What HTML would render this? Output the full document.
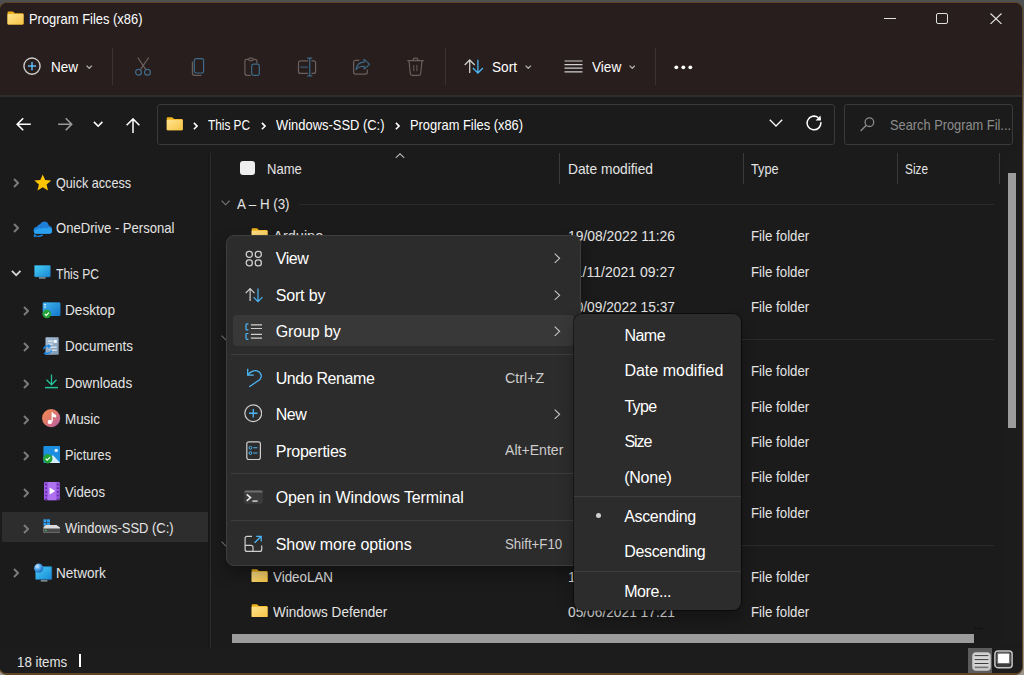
<!DOCTYPE html>
<html><head><meta charset="utf-8"><style>
html,body{margin:0;padding:0;width:1024px;height:675px;overflow:hidden;background:linear-gradient(to bottom,#4e4f50 0px,#4e4f50 60px,#9d978d 150px);}
body{position:relative;font-family:"Liberation Sans",sans-serif;}
.t{position:absolute;white-space:nowrap;line-height:1;}
.r{position:absolute;display:block;}
</style></head><body>
<div class="r" style="left:-1px;top:2px;width:1024px;height:673px;box-sizing:border-box;border:1px solid #5e4424;border-bottom-width:2px;border-radius:8px;background:#271e1d"></div>
<div class="r" style="left:0;top:0;width:1024px;height:675px;clip-path:inset(3px 2px 2px 0px round 7px);">
<div class="r" style="left:0.00px;top:0.00px;width:1024.00px;height:95.00px;background:#271e1d;"></div>
<div class="r" style="left:0.00px;top:95.00px;width:1024.00px;height:2.00px;background:#2f2d2c;"></div>
<div class="r" style="left:0.00px;top:97.00px;width:1024.00px;height:578.00px;background:#1b1b1b;"></div>
<svg width="0" height="0" style="position:absolute"><defs><linearGradient id="gf" x1="0" y1="0" x2="1" y2="1"><stop offset="0" stop-color="#ffe38f"/><stop offset="1" stop-color="#f6c445"/></linearGradient></defs></svg>
<svg class="r" style="left:7.00px;top:10.50px" width="17" height="14" viewBox="0 0 17 13.5"><path d="M0.5 1.2 Q0.5 0.3 1.4 0.3 L5.6 0.3 Q6.3 0.3 6.8 0.9 L7.8 1.9 L15.6 1.9 Q16.5 1.9 16.5 2.8 L16.5 12.3 Q16.5 13.2 15.6 13.2 L1.4 13.2 Q0.5 13.2 0.5 12.3 Z" fill="#f0b21a"/><path d="M0.5 3.6 Q0.5 2.8 1.4 2.8 L15.6 2.8 Q16.5 2.8 16.5 3.6 L16.5 12.3 Q16.5 13.2 15.6 13.2 L1.4 13.2 Q0.5 13.2 0.5 12.3 Z" fill="url(#gf)"/></svg>
<div class="t" style="left:28.60px;top:12px;font-size:14.50px;color:#ffffff;transform:scaleX(0.8915);transform-origin:0 0;">Program Files (x86)</div>
<div class="r" style="left:884.00px;top:18.00px;width:11.50px;height:1.00px;background:#e0e0e0;"></div>
<div class="r" style="left:935.80px;top:13.00px;width:12.20px;height:11.00px;background:transparent;border:1px solid #e0e0e0;border-radius:2px;box-sizing:border-box;"></div>
<svg class="r" style="left:989.50px;top:12.80px" width="12" height="11.5" viewBox="0 0 12 11.5"><path d="M0.5 0.5 L11.5 11 M11.5 0.5 L0.5 11" stroke="#e0e0e0" stroke-width="1.1"/></svg>
<svg class="r" style="left:22.00px;top:56.00px" width="20" height="20" viewBox="0 0 20 20"><circle cx="10" cy="10.1" r="8.1" fill="none" stroke="#cfcfcf" stroke-width="1.4"/><path d="M10 6 V14.2 M5.9 10.1 H14.1" stroke="#5fb8f6" stroke-width="1.5"/></svg>
<div class="t" style="left:51.20px;top:60px;font-size:14.50px;color:#ffffff;transform:scaleX(0.9308);transform-origin:0 0;">New</div>
<svg class="r" style="left:86.00px;top:64.80px" width="6.5" height="4" viewBox="0 0 6.5 4"><path d="M0.6 0.6 L3.25 3.3 L5.9 0.6" fill="none" stroke="#b0b0b0" stroke-width="1.3"/></svg>
<div class="r" style="left:112.00px;top:48.00px;width:1.00px;height:36.50px;background:#3a3332;"></div>
<svg class="r" style="left:134.00px;top:56.00px" width="18" height="20" viewBox="0 0 18 20"><path d="M3.8 1.5 L11.8 13.6 M14.7 1.5 L6.4 13.6" stroke="#6a605d" stroke-width="1.2" fill="none"/><circle cx="4.5" cy="16.2" r="2.9" fill="none" stroke="#3f6b8a" stroke-width="1.2"/><circle cx="13.5" cy="16.2" r="2.9" fill="none" stroke="#3f6b8a" stroke-width="1.2"/></svg>
<svg class="r" style="left:189.50px;top:56.50px" width="16" height="20" viewBox="0 0 16 20"><path d="M2.4 4.5 V16 Q2.4 18.3 4.7 18.3 H11.5" fill="none" stroke="#6a605d" stroke-width="1.2"/><rect x="4.3" y="1.6" width="9.3" height="14.4" rx="2" fill="none" stroke="#3f6b8a" stroke-width="1.2"/></svg>
<svg class="r" style="left:243.00px;top:56.50px" width="18" height="20" viewBox="0 0 18 20"><path d="M5.3 2.35 H3.9 Q1.9 2.35 1.9 4.35 V16.3 Q1.9 18.3 3.9 18.3 H7.8" fill="none" stroke="#6a605d" stroke-width="1.2"/><path d="M10.4 2.35 H11.9 Q13.9 2.35 13.9 4.35 V6.4" fill="none" stroke="#6a605d" stroke-width="1.2"/><rect x="5.6" y="1.1" width="4.6" height="2.5" rx="1.2" fill="none" stroke="#6a605d" stroke-width="1.1"/><rect x="8.7" y="7.1" width="7.6" height="11.2" rx="1.8" fill="none" stroke="#3f6b8a" stroke-width="1.2"/></svg>
<svg class="r" style="left:296.50px;top:56.50px" width="20" height="20" viewBox="0 0 20 20"><path d="M11 3.9 H3.5 Q1.5 3.9 1.5 5.9 V14.4 Q1.5 16.4 3.5 16.4 H11 M14.5 3.9 H16.6 Q18.6 3.9 18.6 5.9 V14.4 Q18.6 16.4 16.6 16.4 H14.5" fill="none" stroke="#6a605d" stroke-width="1.2"/><path d="M12.75 1.1 V18.9 M10.25 1.1 H15.3 M10.25 18.9 H15.3" stroke="#3f6b8a" stroke-width="1.2" fill="none"/><path d="M3.6 10.2 H10.6" stroke="#3f6b8a" stroke-width="1.3" stroke-dasharray="2 0.6" fill="none"/></svg>
<svg class="r" style="left:352.00px;top:58.00px" width="19" height="17" viewBox="0 0 19 17"><path d="M7.3 2.4 H3.6 Q1.6 2.4 1.6 4.4 V14.1 Q1.6 16.1 3.6 16.1 H13.3 Q15.3 16.1 15.3 14.1 V11.6" fill="none" stroke="#6a605d" stroke-width="1.2"/><path d="M4 11.6 Q5 4.2 12.1 4.1 V1.4 L17.6 6.3 L12.1 11 V8.3 Q7.2 8.1 4 11.6 Z" fill="none" stroke="#3f6b8a" stroke-width="1.1" stroke-linejoin="round"/></svg>
<svg class="r" style="left:407.00px;top:56.50px" width="17" height="20" viewBox="0 0 17 20"><path d="M0.3 3.7 H16.7 M6.2 3.7 V2.6 Q6.2 1.1 8.5 1.1 Q10.9 1.1 10.9 2.6 V3.7 M2 4 L3.3 16.5 Q3.5 18.3 5.3 18.3 H11.7 Q13.5 18.3 13.7 16.5 L15 4" fill="none" stroke="#6a605d" stroke-width="1.2"/><path d="M6.8 8 V14.2 M9.9 8 V14.2" stroke="#6a605d" stroke-width="1"/></svg>
<div class="r" style="left:445.00px;top:48.00px;width:1.00px;height:36.50px;background:#3a3332;"></div>
<svg class="r" style="left:464.00px;top:59.00px" width="20" height="16" viewBox="0 0 20 16"><path d="M5.7 1.2 V14.1 M0.7 6 L5.7 1 L10.7 6" fill="none" stroke="#cfcfcf" stroke-width="1.3"/><path d="M13.9 0.8 V14 M8.9 9 L13.9 14 L18.9 9" fill="none" stroke="#4cb6f5" stroke-width="1.3"/></svg>
<div class="t" style="left:492.00px;top:60px;font-size:14.50px;color:#ffffff;transform:scaleX(0.9401);transform-origin:0 0;">Sort</div>
<svg class="r" style="left:525.00px;top:64.80px" width="6.5" height="4" viewBox="0 0 6.5 4"><path d="M0.6 0.6 L3.25 3.3 L5.9 0.6" fill="none" stroke="#b0b0b0" stroke-width="1.3"/></svg>
<svg class="r" style="left:564.00px;top:60.00px" width="19" height="13" viewBox="0 0 19 13"><path d="M0.5 1 H18.5 M0.5 4.6 H18.5 M0.5 8.2 H18.5 M0.5 11.8 H18.5" stroke="#d0d0d0" stroke-width="1.2"/></svg>
<div class="t" style="left:592.00px;top:60px;font-size:14.50px;color:#ffffff;transform:scaleX(0.9385);transform-origin:0 0;">View</div>
<svg class="r" style="left:628.80px;top:64.80px" width="6.5" height="4" viewBox="0 0 6.5 4"><path d="M0.6 0.6 L3.25 3.3 L5.9 0.6" fill="none" stroke="#b0b0b0" stroke-width="1.3"/></svg>
<div class="r" style="left:655.00px;top:48.00px;width:1.00px;height:36.50px;background:#3a3332;"></div>
<svg class="r" style="left:674.00px;top:64.50px" width="19" height="5" viewBox="0 0 19 5"><circle cx="2.3" cy="2.3" r="1.9" fill="#ffffff"/><circle cx="9.3" cy="2.3" r="1.9" fill="#ffffff"/><circle cx="16.3" cy="2.3" r="1.9" fill="#ffffff"/></svg>
<svg class="r" style="left:16.00px;top:117.00px" width="16" height="15" viewBox="0 0 16 15"><path d="M1.2 7.3 H14.8 M7.2 1.3 L1.2 7.3 L7.2 13.3" fill="none" stroke="#ffffff" stroke-width="1.6"/></svg>
<svg class="r" style="left:56.50px;top:117.00px" width="16" height="15" viewBox="0 0 16 15"><g transform="translate(15.9,0) scale(-1,1)"><path d="M1.2 7.3 H14.8 M7.2 1.3 L1.2 7.3 L7.2 13.3" fill="none" stroke="#9a9a9a" stroke-width="1.6"/></g></svg>
<svg class="r" style="left:92.50px;top:121.00px" width="11" height="7" viewBox="0 0 11 7"><path d="M0.9 0.9 L5.15 5.2 L9.4 0.9" fill="none" stroke="#ffffff" stroke-width="1.6"/></svg>
<svg class="r" style="left:125.00px;top:117.50px" width="16" height="16" viewBox="0 0 16 16"><path d="M8 1.2 V15 M1.6 7.3 L8 0.9 L14.4 7.3" fill="none" stroke="#ffffff" stroke-width="1.5"/></svg>
<div class="r" style="left:157.00px;top:104.00px;width:678.00px;height:41.00px;background:#1b1b1b;border:1px solid #3a3a3a;border-radius:3px;box-sizing:border-box;"></div>
<svg class="r" style="left:166.00px;top:117.00px" width="17.5" height="13.5" viewBox="0 0 17 13.5"><path d="M0.5 1.2 Q0.5 0.3 1.4 0.3 L5.6 0.3 Q6.3 0.3 6.8 0.9 L7.8 1.9 L15.6 1.9 Q16.5 1.9 16.5 2.8 L16.5 12.3 Q16.5 13.2 15.6 13.2 L1.4 13.2 Q0.5 13.2 0.5 12.3 Z" fill="#f0b21a"/><path d="M0.5 3.6 Q0.5 2.8 1.4 2.8 L15.6 2.8 Q16.5 2.8 16.5 3.6 L16.5 12.3 Q16.5 13.2 15.6 13.2 L1.4 13.2 Q0.5 13.2 0.5 12.3 Z" fill="url(#gf)"/></svg>
<svg class="r" style="left:192.50px;top:121.50px" width="5" height="8" viewBox="0 0 5 8"><path d="M0.9 0.9 L4.1 4.1 L0.9 7.3" fill="none" stroke="#ffffff" stroke-width="1.6"/></svg>
<div class="t" style="left:208.00px;top:118px;font-size:14.50px;color:#ffffff;transform:scaleX(0.8145);transform-origin:0 0;">This PC</div>
<svg class="r" style="left:260.50px;top:121.50px" width="5" height="8" viewBox="0 0 5 8"><path d="M0.9 0.9 L4.1 4.1 L0.9 7.3" fill="none" stroke="#ffffff" stroke-width="1.6"/></svg>
<div class="t" style="left:275.75px;top:118px;font-size:14.50px;color:#ffffff;transform:scaleX(0.8919);transform-origin:0 0;">Windows-SSD (C:)</div>
<svg class="r" style="left:395.00px;top:121.50px" width="5" height="8" viewBox="0 0 5 8"><path d="M0.9 0.9 L4.1 4.1 L0.9 7.3" fill="none" stroke="#ffffff" stroke-width="1.6"/></svg>
<div class="t" style="left:410.00px;top:118px;font-size:14.50px;color:#ffffff;transform:scaleX(0.8876);transform-origin:0 0;">Program Files (x86)</div>
<svg class="r" style="left:768.50px;top:119.30px" width="14" height="8" viewBox="0 0 14 8"><path d="M0.8 0.8 L7 7 L13.2 0.8" fill="none" stroke="#ffffff" stroke-width="1.3"/></svg>
<svg class="r" style="left:806.30px;top:115.30px" width="17" height="17" viewBox="0 0 17 17"><path d="M14.78 7.05 A6.85 6.85 0 1 1 12.4 2.75" fill="none" stroke="#ffffff" stroke-width="1.5"/><path d="M9.6 5.6 L15 5.6 L14.5 0.5 Z" fill="#ffffff"/></svg>
<div class="r" style="left:844.00px;top:104.00px;width:169.00px;height:41.00px;background:#1b1b1b;border:1px solid #3a3a3a;border-radius:3px;box-sizing:border-box;"></div>
<svg class="r" style="left:860.00px;top:116.50px" width="16" height="15" viewBox="0 0 16 15"><circle cx="9.4" cy="5.2" r="4.3" fill="none" stroke="#8a8a8a" stroke-width="1.3"/><path d="M6.3 8.3 L0.6 14" stroke="#8a8a8a" stroke-width="1.4"/></svg>
<div class="t" style="left:890.30px;top:118px;font-size:14.50px;color:#8c8c8c;transform:scaleX(0.8833);transform-origin:0 0;">Search Program Fil...</div>
<div class="r" style="left:208.30px;top:152.60px;width:1.20px;height:495.00px;background:#171717;"></div>
<div class="r" style="left:209.60px;top:152.60px;width:1.90px;height:495.00px;background:#2a2a2a;"></div>
<svg class="r" style="left:12.80px;top:177.80px" width="6.5" height="10.5" viewBox="0 0 6.5 10.5"><path d="M1 1 L5 5 L1 9" fill="none" stroke="#7a7a7a" stroke-width="2"/></svg>
<svg class="r" style="left:33.50px;top:173.50px" width="17.5" height="17.5" viewBox="0 0 17.5 17.5"><path d="M8.75 0.4 L11.2 6 L17.2 6.5 L12.6 10.4 L14 16.4 L8.75 13.2 L3.5 16.4 L4.9 10.4 L0.3 6.5 L6.3 6 Z" fill="#ffc400"/></svg>
<div class="t" style="left:55.50px;top:176px;font-size:14.50px;color:#e4e4e4;transform:scaleX(0.8699);transform-origin:0 0;">Quick access</div>
<svg class="r" style="left:12.80px;top:222.80px" width="6.5" height="10.5" viewBox="0 0 6.5 10.5"><path d="M1 1 L5 5 L1 9" fill="none" stroke="#7a7a7a" stroke-width="2"/></svg>
<svg class="r" style="left:32.50px;top:221.00px" width="20" height="17" viewBox="0 0 20 17"><path d="M4 12.8 Q0.6 12.8 0.6 9.4 Q0.6 6 4 5.8 Q4.8 3.4 7 3.2 Q8.4 0.6 11.2 0.6 Q15.2 0.6 15.8 4.8 Q19.2 5.4 19.2 8.8 Q19.2 12.8 15.4 12.8 Z" fill="#1f7ed6"/><path d="M3.8 12.8 Q0.8 12.8 0.9 10.2 Q1.6 7.8 4.4 8.2 Q6 6.4 8.4 7.8 Q10.6 6 13 7.4 Q15.8 5.6 18 7.4 Q19.6 9.2 19 11.2 Q18.2 12.8 15.6 12.8 Z" fill="#2aa1f0"/><path d="M1.6 16.2 L1.4 13.4 M1.4 13.6 Q4 16.8 9.8 14.2" fill="none" stroke="#1e86e0" stroke-width="1.3"/></svg>
<div class="t" style="left:55.50px;top:221px;font-size:14.50px;color:#e4e4e4;transform:scaleX(0.9021);transform-origin:0 0;">OneDrive - Personal</div>
<svg class="r" style="left:11.00px;top:270.30px" width="10.5" height="6.5" viewBox="0 0 10.5 6.5"><path d="M0.9 0.9 L5.2 5.2 L9.5 0.9" fill="none" stroke="#d4d4d4" stroke-width="1.8"/></svg>
<svg class="r" style="left:34.00px;top:265.30px" width="17" height="14.6" viewBox="0 0 17 14.6"><defs><linearGradient id="gm" x1="0" y1="0" x2="1" y2="1"><stop offset="0" stop-color="#45d0f5"/><stop offset="1" stop-color="#1a86d6"/></linearGradient></defs><rect x="0.4" y="0.3" width="16" height="11.6" rx="0.8" fill="url(#gm)" stroke="#2b6f9c" stroke-width="0.5"/><rect x="5" y="12.3" width="6.6" height="1.3" fill="#9aa6ae"/></svg>
<div class="t" style="left:55.50px;top:267px;font-size:14.50px;color:#e4e4e4;transform:scaleX(0.8339);transform-origin:0 0;">This PC</div>
<div class="r" style="left:1.70px;top:511.80px;width:206.30px;height:30.70px;background:#2d2d2d;"></div>
<svg class="r" style="left:22.60px;top:305.50px" width="6.5" height="10.5" viewBox="0 0 6.5 10.5"><path d="M1 1 L5 5 L1 9" fill="none" stroke="#7a7a7a" stroke-width="2"/></svg>
<div class="t" style="left:64.80px;top:303px;font-size:14.50px;color:#e4e4e4;transform:scaleX(0.9400);transform-origin:0 0;">Desktop</div>
<svg class="r" style="left:22.60px;top:341.50px" width="6.5" height="10.5" viewBox="0 0 6.5 10.5"><path d="M1 1 L5 5 L1 9" fill="none" stroke="#7a7a7a" stroke-width="2"/></svg>
<div class="t" style="left:64.80px;top:339px;font-size:14.50px;color:#e4e4e4;transform:scaleX(0.9272);transform-origin:0 0;">Documents</div>
<svg class="r" style="left:22.60px;top:378.50px" width="6.5" height="10.5" viewBox="0 0 6.5 10.5"><path d="M1 1 L5 5 L1 9" fill="none" stroke="#7a7a7a" stroke-width="2"/></svg>
<div class="t" style="left:64.80px;top:376px;font-size:14.50px;color:#e4e4e4;transform:scaleX(0.9368);transform-origin:0 0;">Downloads</div>
<svg class="r" style="left:22.60px;top:414.50px" width="6.5" height="10.5" viewBox="0 0 6.5 10.5"><path d="M1 1 L5 5 L1 9" fill="none" stroke="#7a7a7a" stroke-width="2"/></svg>
<div class="t" style="left:64.80px;top:412px;font-size:14.50px;color:#e4e4e4;transform:scaleX(0.9244);transform-origin:0 0;">Music</div>
<svg class="r" style="left:22.60px;top:450.50px" width="6.5" height="10.5" viewBox="0 0 6.5 10.5"><path d="M1 1 L5 5 L1 9" fill="none" stroke="#7a7a7a" stroke-width="2"/></svg>
<div class="t" style="left:64.80px;top:448px;font-size:14.50px;color:#e4e4e4;transform:scaleX(0.8782);transform-origin:0 0;">Pictures</div>
<svg class="r" style="left:22.60px;top:487.50px" width="6.5" height="10.5" viewBox="0 0 6.5 10.5"><path d="M1 1 L5 5 L1 9" fill="none" stroke="#7a7a7a" stroke-width="2"/></svg>
<div class="t" style="left:64.80px;top:485px;font-size:14.50px;color:#e4e4e4;transform:scaleX(0.9076);transform-origin:0 0;">Videos</div>
<svg class="r" style="left:22.60px;top:523.50px" width="6.5" height="10.5" viewBox="0 0 6.5 10.5"><path d="M1 1 L5 5 L1 9" fill="none" stroke="#7a7a7a" stroke-width="2"/></svg>
<div class="t" style="left:64.80px;top:521px;font-size:14.50px;color:#e4e4e4;transform:scaleX(0.8927);transform-origin:0 0;">Windows-SSD (C:)</div>
<svg class="r" style="left:42.00px;top:302.00px" width="19" height="17" viewBox="0 0 19 17"><rect x="0.8" y="0.5" width="17.5" height="13.5" rx="1.2" fill="#1f8bd8"/><rect x="0.8" y="0.5" width="17.5" height="13.5" rx="1.2" fill="url(#g1)"/><rect x="2" y="2" width="2" height="1.2" fill="#cfe9fb"/><rect x="2" y="4.4" width="2" height="1.2" fill="#cfe9fb"/><circle cx="4.8" cy="12" r="4.3" fill="#23a637"/><path d="M2.8 12 L4.3 13.4 L6.9 10.6" fill="none" stroke="#fff" stroke-width="1.1"/><defs><linearGradient id="g1" x1="0" y1="0" x2="1" y2="1"><stop offset="0" stop-color="#4fc3f7" stop-opacity=".8"/><stop offset="1" stop-color="#0e6fc6" stop-opacity=".6"/></linearGradient></defs></svg>
<svg class="r" style="left:41.50px;top:336.80px" width="18" height="18" viewBox="0 0 18 18"><defs><linearGradient id="gd" x1="0" y1="0" x2="1" y2="1"><stop offset="0" stop-color="#a9c0d6"/><stop offset="1" stop-color="#7d98b3"/></linearGradient></defs><rect x="3.5" y="0.3" width="13.2" height="17.4" rx="0.8" fill="url(#gd)"/><rect x="6" y="3.6" width="4.6" height="1.1" fill="#eef4fa"/><rect x="11.6" y="3" width="3.2" height="3" fill="#f4f8fc"/><rect x="6" y="6.6" width="4.6" height="1.1" fill="#eef4fa"/><rect x="7.5" y="9.6" width="7.3" height="1.1" fill="#eef4fa"/><rect x="7.5" y="12.6" width="7.3" height="1.1" fill="#eef4fa"/><path d="M1.6 12.4 Q2.2 9.2 5.8 9 L8 9.2 M6.4 7.6 L8.2 9.2 L6.4 10.8 M9.4 12.6 Q8.8 16.4 5 16.5 L2.6 16.3 M4.4 14.9 L2.6 16.3 L4.4 17.7" fill="none" stroke="#1e88e5" stroke-width="1.3"/></svg>
<svg class="r" style="left:44.00px;top:373.50px" width="15" height="15" viewBox="0 0 15 15"><path d="M7.5 0.5 V10.5 M2.5 5.8 L7.5 10.8 L12.5 5.8" fill="none" stroke="#24c29a" stroke-width="1.3"/><path d="M1 13.6 H14" stroke="#24c29a" stroke-width="1.5"/></svg>
<svg class="r" style="left:42.30px;top:409.30px" width="18.5" height="18.5" viewBox="0 0 18.5 18.5"><defs><linearGradient id="g2" x1="0" y1="0" x2="1" y2="1"><stop offset="0" stop-color="#f28c52"/><stop offset="0.45" stop-color="#e07a6a"/><stop offset="1" stop-color="#b35cb0"/></linearGradient></defs><circle cx="9.15" cy="9.15" r="9.05" fill="url(#g2)"/><path d="M10.2 12.6 V3.6 Q11 5.6 13.6 6.4 V7.8 Q11.6 7.4 10.2 6.4" fill="#fff" stroke="#fff" stroke-width="1.2" stroke-linejoin="round"/><circle cx="7.9" cy="12.9" r="2.2" fill="#fff"/></svg>
<svg class="r" style="left:42.50px;top:446.00px" width="17.5" height="17.5" viewBox="0 0 17.5 17.5"><rect x="0.4" y="0" width="16.8" height="17" rx="1" fill="#1b8ee0"/><path d="M5.5 17 L9.8 9 L17.2 17 Z" fill="#d6eefc"/><circle cx="13.2" cy="4.4" r="1.7" fill="#eef8ff"/><circle cx="4.8" cy="12.7" r="4.7" fill="#22a33a"/><path d="M2.6 12.7 L4.2 14.2 L7.1 11.2" fill="none" stroke="#fff" stroke-width="1.1"/></svg>
<svg class="r" style="left:43.80px;top:482.00px" width="16" height="18.5" viewBox="0 0 16 18.5"><rect x="0" y="0" width="15.8" height="18.2" rx="1.2" fill="#9c5ae6"/><rect x="4" y="0" width="7.8" height="18.2" fill="#ae72f0"/><rect x="1.2" y="1.6" width="1.8" height="1.8" rx="0.4" fill="#5b2c9c"/><rect x="12.9" y="1.6" width="1.8" height="1.8" rx="0.4" fill="#5b2c9c"/><rect x="1.2" y="5.3" width="1.8" height="1.8" rx="0.4" fill="#5b2c9c"/><rect x="12.9" y="5.3" width="1.8" height="1.8" rx="0.4" fill="#5b2c9c"/><rect x="1.2" y="9.0" width="1.8" height="1.8" rx="0.4" fill="#5b2c9c"/><rect x="12.9" y="9.0" width="1.8" height="1.8" rx="0.4" fill="#5b2c9c"/><rect x="1.2" y="12.7" width="1.8" height="1.8" rx="0.4" fill="#5b2c9c"/><rect x="12.9" y="12.7" width="1.8" height="1.8" rx="0.4" fill="#5b2c9c"/><rect x="1.2" y="16.2" width="1.8" height="1.8" rx="0.4" fill="#5b2c9c"/><rect x="12.9" y="16.2" width="1.8" height="1.8" rx="0.4" fill="#5b2c9c"/><path d="M5.6 5.6 L11.2 9.1 L5.6 12.6 Z" fill="#ffffff"/></svg>
<svg class="r" style="left:42.50px;top:518.50px" width="17.5" height="14" viewBox="0 0 17.5 14"><rect x="0.5" y="0.3" width="3" height="3" fill="#2f9ef0"/><rect x="4" y="0.3" width="3" height="3" fill="#2f9ef0"/><rect x="0.5" y="3.8" width="3" height="3" fill="#2f9ef0"/><rect x="4" y="3.8" width="3" height="3" fill="#2f9ef0"/><path d="M0.5 8 L3 6 H13.5 L17 8.5 V13.5 H0.5 Z" fill="#dcdcdc"/><rect x="0.5" y="9.5" width="16.5" height="4" fill="#4a4a4a"/><rect x="2" y="10.8" width="1.5" height="1.4" fill="#34c759"/></svg>
<svg class="r" style="left:12.80px;top:567.80px" width="6.5" height="10.5" viewBox="0 0 6.5 10.5"><path d="M1 1 L5 5 L1 9" fill="none" stroke="#7a7a7a" stroke-width="2"/></svg>
<svg class="r" style="left:33.50px;top:563.00px" width="19" height="20" viewBox="0 0 19 20"><defs><linearGradient id="gn" x1="0" y1="0" x2="1" y2="1"><stop offset="0" stop-color="#45d0f5"/><stop offset="1" stop-color="#1a86d6"/></linearGradient><radialGradient id="gg" cx="0.35" cy="0.3" r="0.8"><stop offset="0" stop-color="#cfeaff"/><stop offset="0.5" stop-color="#3f9be8"/><stop offset="1" stop-color="#1d5fb0"/></radialGradient></defs><rect x="1.5" y="3.6" width="16.3" height="13" rx="0.8" fill="url(#gn)" stroke="#2b6f9c" stroke-width="0.5"/><rect x="6.8" y="17.2" width="6.6" height="1.3" fill="#9aa6ae"/><circle cx="4.7" cy="5.2" r="4.6" fill="url(#gg)"/></svg>
<div class="t" style="left:55.90px;top:566px;font-size:14.50px;color:#e4e4e4;transform:scaleX(0.9365);transform-origin:0 0;">Network</div>
<div class="r" style="left:240.20px;top:161.00px;width:14.40px;height:14.00px;background:#eeeeee;border-radius:3px;"></div>
<div class="t" style="left:267.00px;top:162px;font-size:14.50px;color:#e4e4e4;transform:scaleX(0.8984);transform-origin:0 0;">Name</div>
<svg class="r" style="left:395.00px;top:153.30px" width="10" height="5.5" viewBox="0 0 10 5.5"><path d="M0.8 4.8 L5 0.8 L9.2 4.8" fill="none" stroke="#b8b8b8" stroke-width="1.1"/></svg>
<div class="r" style="left:559.00px;top:153.00px;width:1.00px;height:31.00px;background:#3a3a3a;"></div>
<div class="r" style="left:743.00px;top:153.00px;width:1.00px;height:31.00px;background:#3a3a3a;"></div>
<div class="r" style="left:897.00px;top:153.00px;width:1.00px;height:31.00px;background:#3a3a3a;"></div>
<div class="r" style="left:999.00px;top:153.00px;width:1.00px;height:31.00px;background:#3a3a3a;"></div>
<div class="t" style="left:567.50px;top:162px;font-size:14.50px;color:#e4e4e4;transform:scaleX(0.9501);transform-origin:0 0;">Date modified</div>
<div class="t" style="left:751.25px;top:162px;font-size:14.50px;color:#e4e4e4;transform:scaleX(0.8748);transform-origin:0 0;">Type</div>
<div class="t" style="left:904.50px;top:162px;font-size:14.50px;color:#e4e4e4;transform:scaleX(0.8154);transform-origin:0 0;">Size</div>
<div class="r" style="left:1002.00px;top:152.60px;width:20.00px;height:490.00px;background:#1c1c1c;"></div>
<div class="r" style="left:1008.00px;top:172.50px;width:8.40px;height:255.50px;background:#9c9c9c;"></div>
<svg class="r" style="left:221.20px;top:200.40px" width="9.3" height="6" viewBox="0 0 9.3 6"><path d="M0.6 0.6 L4.6 4.8 L8.6 0.6" fill="none" stroke="#7a7a7a" stroke-width="1.1"/></svg>
<div class="t" style="left:237.00px;top:197px;font-size:14.50px;color:#e4e4e4;transform:scaleX(0.9176);transform-origin:0 0;">A – H (3)</div>
<div class="r" style="left:298.75px;top:204.00px;width:695.25px;height:1.00px;background:#2b2b2b;"></div>
<svg class="r" style="left:221.20px;top:334.90px" width="9.3" height="6" viewBox="0 0 9.3 6"><path d="M0.6 0.6 L4.6 4.8 L8.6 0.6" fill="none" stroke="#7a7a7a" stroke-width="1.1"/></svg>
<div class="t" style="left:237.00px;top:332px;font-size:14.50px;color:#e4e4e4;transform:scaleX(0.9745);transform-origin:0 0;">I – P (5)</div>
<div class="r" style="left:298.75px;top:338.50px;width:695.25px;height:1.00px;background:#2b2b2b;"></div>
<svg class="r" style="left:221.20px;top:540.90px" width="9.3" height="6" viewBox="0 0 9.3 6"><path d="M0.6 0.6 L4.6 4.8 L8.6 0.6" fill="none" stroke="#7a7a7a" stroke-width="1.1"/></svg>
<div class="t" style="left:237.00px;top:538px;font-size:14.50px;color:#e4e4e4;transform:scaleX(0.9309);transform-origin:0 0;">Q – Z (2)</div>
<div class="r" style="left:298.75px;top:544.50px;width:695.25px;height:1.00px;background:#2b2b2b;"></div>
<svg class="r" style="left:251.00px;top:227.80px" width="17.2" height="13.4" viewBox="0 0 17 13.5"><path d="M0.5 1.2 Q0.5 0.3 1.4 0.3 L5.6 0.3 Q6.3 0.3 6.8 0.9 L7.8 1.9 L15.6 1.9 Q16.5 1.9 16.5 2.8 L16.5 12.3 Q16.5 13.2 15.6 13.2 L1.4 13.2 Q0.5 13.2 0.5 12.3 Z" fill="#f0b21a"/><path d="M0.5 3.6 Q0.5 2.8 1.4 2.8 L15.6 2.8 Q16.5 2.8 16.5 3.6 L16.5 12.3 Q16.5 13.2 15.6 13.2 L1.4 13.2 Q0.5 13.2 0.5 12.3 Z" fill="url(#gf)"/></svg>
<div class="t" style="left:273.25px;top:229px;font-size:14.50px;color:#e4e4e4;">Arduino</div>
<div class="t" style="left:567.50px;top:229px;font-size:14.50px;color:#e4e4e4;transform:scaleX(0.9570);transform-origin:0 0;">19/08/2022 11:26</div>
<div class="t" style="left:751.25px;top:229px;font-size:14.50px;color:#e4e4e4;transform:scaleX(0.9150);transform-origin:0 0;">File folder</div>
<svg class="r" style="left:251.00px;top:263.80px" width="17.2" height="13.4" viewBox="0 0 17 13.5"><path d="M0.5 1.2 Q0.5 0.3 1.4 0.3 L5.6 0.3 Q6.3 0.3 6.8 0.9 L7.8 1.9 L15.6 1.9 Q16.5 1.9 16.5 2.8 L16.5 12.3 Q16.5 13.2 15.6 13.2 L1.4 13.2 Q0.5 13.2 0.5 12.3 Z" fill="#f0b21a"/><path d="M0.5 3.6 Q0.5 2.8 1.4 2.8 L15.6 2.8 Q16.5 2.8 16.5 3.6 L16.5 12.3 Q16.5 13.2 15.6 13.2 L1.4 13.2 Q0.5 13.2 0.5 12.3 Z" fill="url(#gf)"/></svg>
<div class="t" style="left:273.25px;top:265px;font-size:14.50px;color:#e4e4e4;">Common Files</div>
<div class="t" style="left:567.50px;top:265px;font-size:14.50px;color:#e4e4e4;transform:scaleX(0.9663);transform-origin:0 0;">11/11/2021 09:27</div>
<div class="t" style="left:751.25px;top:265px;font-size:14.50px;color:#e4e4e4;transform:scaleX(0.9150);transform-origin:0 0;">File folder</div>
<svg class="r" style="left:251.00px;top:298.80px" width="17.2" height="13.4" viewBox="0 0 17 13.5"><path d="M0.5 1.2 Q0.5 0.3 1.4 0.3 L5.6 0.3 Q6.3 0.3 6.8 0.9 L7.8 1.9 L15.6 1.9 Q16.5 1.9 16.5 2.8 L16.5 12.3 Q16.5 13.2 15.6 13.2 L1.4 13.2 Q0.5 13.2 0.5 12.3 Z" fill="#f0b21a"/><path d="M0.5 3.6 Q0.5 2.8 1.4 2.8 L15.6 2.8 Q16.5 2.8 16.5 3.6 L16.5 12.3 Q16.5 13.2 15.6 13.2 L1.4 13.2 Q0.5 13.2 0.5 12.3 Z" fill="url(#gf)"/></svg>
<div class="t" style="left:273.25px;top:300px;font-size:14.50px;color:#e4e4e4;">Google</div>
<div class="t" style="left:567.50px;top:300px;font-size:14.50px;color:#e4e4e4;transform:scaleX(0.9479);transform-origin:0 0;">20/09/2022 15:37</div>
<div class="t" style="left:751.25px;top:300px;font-size:14.50px;color:#e4e4e4;transform:scaleX(0.9150);transform-origin:0 0;">File folder</div>
<svg class="r" style="left:251.00px;top:362.80px" width="17.2" height="13.4" viewBox="0 0 17 13.5"><path d="M0.5 1.2 Q0.5 0.3 1.4 0.3 L5.6 0.3 Q6.3 0.3 6.8 0.9 L7.8 1.9 L15.6 1.9 Q16.5 1.9 16.5 2.8 L16.5 12.3 Q16.5 13.2 15.6 13.2 L1.4 13.2 Q0.5 13.2 0.5 12.3 Z" fill="#f0b21a"/><path d="M0.5 3.6 Q0.5 2.8 1.4 2.8 L15.6 2.8 Q16.5 2.8 16.5 3.6 L16.5 12.3 Q16.5 13.2 15.6 13.2 L1.4 13.2 Q0.5 13.2 0.5 12.3 Z" fill="url(#gf)"/></svg>
<div class="t" style="left:273.25px;top:364px;font-size:14.50px;color:#e4e4e4;">InstallShield Installation Information</div>
<div class="t" style="left:567.50px;top:364px;font-size:14.50px;color:#e4e4e4;transform:scaleX(0.9663);transform-origin:0 0;">11/11/2021 09:27</div>
<div class="t" style="left:751.25px;top:364px;font-size:14.50px;color:#e4e4e4;transform:scaleX(0.9150);transform-origin:0 0;">File folder</div>
<svg class="r" style="left:251.00px;top:398.80px" width="17.2" height="13.4" viewBox="0 0 17 13.5"><path d="M0.5 1.2 Q0.5 0.3 1.4 0.3 L5.6 0.3 Q6.3 0.3 6.8 0.9 L7.8 1.9 L15.6 1.9 Q16.5 1.9 16.5 2.8 L16.5 12.3 Q16.5 13.2 15.6 13.2 L1.4 13.2 Q0.5 13.2 0.5 12.3 Z" fill="#f0b21a"/><path d="M0.5 3.6 Q0.5 2.8 1.4 2.8 L15.6 2.8 Q16.5 2.8 16.5 3.6 L16.5 12.3 Q16.5 13.2 15.6 13.2 L1.4 13.2 Q0.5 13.2 0.5 12.3 Z" fill="url(#gf)"/></svg>
<div class="t" style="left:273.25px;top:400px;font-size:14.50px;color:#e4e4e4;">Internet Explorer</div>
<div class="t" style="left:567.50px;top:400px;font-size:14.50px;color:#e4e4e4;transform:scaleX(0.9479);transform-origin:0 0;">05/06/2021 17:21</div>
<div class="t" style="left:751.25px;top:400px;font-size:14.50px;color:#e4e4e4;transform:scaleX(0.9150);transform-origin:0 0;">File folder</div>
<svg class="r" style="left:251.00px;top:433.80px" width="17.2" height="13.4" viewBox="0 0 17 13.5"><path d="M0.5 1.2 Q0.5 0.3 1.4 0.3 L5.6 0.3 Q6.3 0.3 6.8 0.9 L7.8 1.9 L15.6 1.9 Q16.5 1.9 16.5 2.8 L16.5 12.3 Q16.5 13.2 15.6 13.2 L1.4 13.2 Q0.5 13.2 0.5 12.3 Z" fill="#f0b21a"/><path d="M0.5 3.6 Q0.5 2.8 1.4 2.8 L15.6 2.8 Q16.5 2.8 16.5 3.6 L16.5 12.3 Q16.5 13.2 15.6 13.2 L1.4 13.2 Q0.5 13.2 0.5 12.3 Z" fill="url(#gf)"/></svg>
<div class="t" style="left:273.25px;top:435px;font-size:14.50px;color:#e4e4e4;">Microsoft</div>
<div class="t" style="left:567.50px;top:435px;font-size:14.50px;color:#e4e4e4;transform:scaleX(0.9479);transform-origin:0 0;">20/09/2022 15:37</div>
<div class="t" style="left:751.25px;top:435px;font-size:14.50px;color:#e4e4e4;transform:scaleX(0.9150);transform-origin:0 0;">File folder</div>
<svg class="r" style="left:251.00px;top:468.80px" width="17.2" height="13.4" viewBox="0 0 17 13.5"><path d="M0.5 1.2 Q0.5 0.3 1.4 0.3 L5.6 0.3 Q6.3 0.3 6.8 0.9 L7.8 1.9 L15.6 1.9 Q16.5 1.9 16.5 2.8 L16.5 12.3 Q16.5 13.2 15.6 13.2 L1.4 13.2 Q0.5 13.2 0.5 12.3 Z" fill="#f0b21a"/><path d="M0.5 3.6 Q0.5 2.8 1.4 2.8 L15.6 2.8 Q16.5 2.8 16.5 3.6 L16.5 12.3 Q16.5 13.2 15.6 13.2 L1.4 13.2 Q0.5 13.2 0.5 12.3 Z" fill="url(#gf)"/></svg>
<div class="t" style="left:273.25px;top:470px;font-size:14.50px;color:#e4e4e4;">Microsoft.NET</div>
<div class="t" style="left:567.50px;top:470px;font-size:14.50px;color:#e4e4e4;transform:scaleX(0.9479);transform-origin:0 0;">05/06/2021 17:21</div>
<div class="t" style="left:751.25px;top:470px;font-size:14.50px;color:#e4e4e4;transform:scaleX(0.9150);transform-origin:0 0;">File folder</div>
<svg class="r" style="left:251.00px;top:504.80px" width="17.2" height="13.4" viewBox="0 0 17 13.5"><path d="M0.5 1.2 Q0.5 0.3 1.4 0.3 L5.6 0.3 Q6.3 0.3 6.8 0.9 L7.8 1.9 L15.6 1.9 Q16.5 1.9 16.5 2.8 L16.5 12.3 Q16.5 13.2 15.6 13.2 L1.4 13.2 Q0.5 13.2 0.5 12.3 Z" fill="#f0b21a"/><path d="M0.5 3.6 Q0.5 2.8 1.4 2.8 L15.6 2.8 Q16.5 2.8 16.5 3.6 L16.5 12.3 Q16.5 13.2 15.6 13.2 L1.4 13.2 Q0.5 13.2 0.5 12.3 Z" fill="url(#gf)"/></svg>
<div class="t" style="left:273.25px;top:506px;font-size:14.50px;color:#e4e4e4;">MSBuild</div>
<div class="t" style="left:567.50px;top:506px;font-size:14.50px;color:#e4e4e4;transform:scaleX(0.9663);transform-origin:0 0;">11/11/2021 09:27</div>
<div class="t" style="left:751.25px;top:506px;font-size:14.50px;color:#e4e4e4;transform:scaleX(0.9150);transform-origin:0 0;">File folder</div>
<svg class="r" style="left:251.00px;top:568.80px" width="17.2" height="13.4" viewBox="0 0 17 13.5"><path d="M0.5 1.2 Q0.5 0.3 1.4 0.3 L5.6 0.3 Q6.3 0.3 6.8 0.9 L7.8 1.9 L15.6 1.9 Q16.5 1.9 16.5 2.8 L16.5 12.3 Q16.5 13.2 15.6 13.2 L1.4 13.2 Q0.5 13.2 0.5 12.3 Z" fill="#f0b21a"/><path d="M0.5 3.6 Q0.5 2.8 1.4 2.8 L15.6 2.8 Q16.5 2.8 16.5 3.6 L16.5 12.3 Q16.5 13.2 15.6 13.2 L1.4 13.2 Q0.5 13.2 0.5 12.3 Z" fill="url(#gf)"/></svg>
<div class="t" style="left:273.25px;top:570px;font-size:14.50px;color:#e4e4e4;transform:scaleX(0.9227);transform-origin:0 0;">VideoLAN</div>
<div class="t" style="left:567.50px;top:570px;font-size:14.50px;color:#e4e4e4;transform:scaleX(0.9479);transform-origin:0 0;">14/03/2022 10:12</div>
<div class="t" style="left:751.25px;top:570px;font-size:14.50px;color:#e4e4e4;transform:scaleX(0.9150);transform-origin:0 0;">File folder</div>
<svg class="r" style="left:251.00px;top:603.80px" width="17.2" height="13.4" viewBox="0 0 17 13.5"><path d="M0.5 1.2 Q0.5 0.3 1.4 0.3 L5.6 0.3 Q6.3 0.3 6.8 0.9 L7.8 1.9 L15.6 1.9 Q16.5 1.9 16.5 2.8 L16.5 12.3 Q16.5 13.2 15.6 13.2 L1.4 13.2 Q0.5 13.2 0.5 12.3 Z" fill="#f0b21a"/><path d="M0.5 3.6 Q0.5 2.8 1.4 2.8 L15.6 2.8 Q16.5 2.8 16.5 3.6 L16.5 12.3 Q16.5 13.2 15.6 13.2 L1.4 13.2 Q0.5 13.2 0.5 12.3 Z" fill="url(#gf)"/></svg>
<div class="t" style="left:273.25px;top:605px;font-size:14.50px;color:#e4e4e4;transform:scaleX(0.9327);transform-origin:0 0;">Windows Defender</div>
<div class="t" style="left:567.50px;top:605px;font-size:14.50px;color:#e4e4e4;transform:scaleX(0.9479);transform-origin:0 0;">05/06/2021 17:21</div>
<div class="t" style="left:751.25px;top:605px;font-size:14.50px;color:#e4e4e4;transform:scaleX(0.9150);transform-origin:0 0;">File folder</div>
<div class="r" style="left:232.00px;top:634.25px;width:741.60px;height:8.25px;background:#9c9c9c;"></div>
<div class="r" style="left:974.00px;top:628.30px;width:8.60px;height:1.00px;background:#0f0f0f;"></div>
<div class="r" style="left:0.00px;top:647.50px;width:1024.00px;height:28.00px;background:#1c1c1c;"></div>
<div class="t" style="left:16.90px;top:655px;font-size:14.50px;color:#e4e4e4;transform:scaleX(0.9161);transform-origin:0 0;">18 items</div>
<div class="r" style="left:79.00px;top:654.40px;width:1.60px;height:13.10px;background:#ffffff;"></div>
<div class="r" style="left:968.10px;top:647.90px;width:23.90px;height:25.50px;background:#5c5c5c;"></div>
<svg class="r" style="left:971.50px;top:651.70px" width="19" height="19" viewBox="0 0 19 19"><rect x="0.8" y="0.8" width="17.4" height="17.4" rx="3" fill="#d6d6d6" stroke="#c2c2c2" stroke-width="1.2"/><path d="M2.6 3.6 H16.4 M2.6 7.6 H16.4 M2.6 11.5 H16.4" stroke="#3b3b3b" stroke-width="1"/><path d="M2.6 15.4 H16.4" stroke="#777" stroke-width="1.6"/></svg>
<svg class="r" style="left:994.00px;top:650.40px" width="19" height="19" viewBox="0 0 19 19"><rect x="0.9" y="0.9" width="17.2" height="16.8" rx="3" fill="#2e2e2e" stroke="#c6c6c6" stroke-width="1.5"/><rect x="3.4" y="3" width="12.4" height="10.6" rx="1.4" fill="#ffffff" stroke="#707070" stroke-width="1.4"/><path d="M3.6 16 H15.6" stroke="#505050" stroke-width="1"/></svg>
<div class="r" style="left:226px;top:235px;width:355px;height:330.6px;box-sizing:border-box;background:#2c2c2c;border:1px solid #3e3e3e;border-radius:8px;box-shadow:0 8px 16px rgba(0,0,0,.35);"></div>
<div class="r" style="left:233.10px;top:315.00px;width:340.90px;height:31.00px;background:#383838;border-radius:4px;"></div>
<svg class="r" style="left:554.00px;top:253.00px" width="6.5" height="10.6" viewBox="0 0 6.5 10.6"><path d="M0.7 0.7 L5.6 5.3 L0.7 9.9" fill="none" stroke="#c8c8c8" stroke-width="1.1"/></svg>
<svg class="r" style="left:554.00px;top:289.50px" width="6.5" height="10.6" viewBox="0 0 6.5 10.6"><path d="M0.7 0.7 L5.6 5.3 L0.7 9.9" fill="none" stroke="#c8c8c8" stroke-width="1.1"/></svg>
<svg class="r" style="left:554.00px;top:325.80px" width="6.5" height="10.6" viewBox="0 0 6.5 10.6"><path d="M0.7 0.7 L5.6 5.3 L0.7 9.9" fill="none" stroke="#c8c8c8" stroke-width="1.1"/></svg>
<svg class="r" style="left:554.00px;top:408.90px" width="6.5" height="10.6" viewBox="0 0 6.5 10.6"><path d="M0.7 0.7 L5.6 5.3 L0.7 9.9" fill="none" stroke="#c8c8c8" stroke-width="1.1"/></svg>
<div class="r" style="left:230.70px;top:353.50px;width:349.00px;height:1.00px;background:#3d3d3d;"></div>
<div class="r" style="left:230.70px;top:473.00px;width:349.00px;height:1.00px;background:#3d3d3d;"></div>
<div class="r" style="left:230.70px;top:520.00px;width:349.00px;height:1.00px;background:#3d3d3d;"></div>
<div class="t" style="left:275.70px;top:251px;font-size:16.00px;color:#ffffff;letter-spacing:-0.423px;">View</div>
<div class="t" style="left:275.70px;top:288px;font-size:16.00px;color:#ffffff;letter-spacing:-0.155px;">Sort by</div>
<div class="t" style="left:275.70px;top:324px;font-size:16.00px;color:#ffffff;letter-spacing:-0.102px;">Group by</div>
<div class="t" style="left:275.70px;top:371px;font-size:16.00px;color:#ffffff;letter-spacing:-0.397px;">Undo Rename</div>
<div class="t" style="left:275.70px;top:407px;font-size:16.00px;color:#ffffff;letter-spacing:-0.403px;">New</div>
<div class="t" style="left:275.70px;top:444px;font-size:16.00px;color:#ffffff;letter-spacing:-0.222px;">Properties</div>
<div class="t" style="left:275.70px;top:490px;font-size:16.00px;color:#ffffff;letter-spacing:-0.084px;">Open in Windows Terminal</div>
<div class="t" style="left:275.70px;top:537px;font-size:16.00px;color:#ffffff;letter-spacing:-0.062px;">Show more options</div>
<div class="t" style="left:504.70px;top:371px;font-size:14.00px;color:#cccccc;transform:scaleX(1.0208);transform-origin:0 0;">Ctrl+Z</div>
<div class="t" style="left:504.60px;top:443px;font-size:14.00px;color:#cccccc;transform:scaleX(1.0073);transform-origin:0 0;">Alt+Enter</div>
<div class="t" style="left:504.60px;top:537px;font-size:14.00px;color:#cccccc;transform:scaleX(0.9484);transform-origin:0 0;">Shift+F10</div>
<svg class="r" style="left:244.50px;top:249.50px" width="18" height="17" viewBox="0 0 18 17"><g fill="none" stroke="#cfcfcf" stroke-width="1.3"><rect x="1.3" y="1.3" width="6" height="6" rx="2.6"/><rect x="10.3" y="1.3" width="6" height="6" rx="2.6"/><rect x="1.3" y="9.8" width="6" height="6" rx="2.6"/><rect x="10.3" y="9.8" width="6" height="6" rx="2.6"/></g></svg>
<svg class="r" style="left:244.50px;top:285.50px" width="18" height="17" viewBox="0 0 18 17"><path d="M5.1 2.8 V15 M0.7 7.2 L5.1 2.7 L9.5 7.2" fill="none" stroke="#cfcfcf" stroke-width="1.2"/><path d="M13 2.5 V15.6 M8.6 11.2 L13 15.6 L17.4 11.2" fill="none" stroke="#4cb6f5" stroke-width="1.2"/></svg>
<svg class="r" style="left:244.50px;top:322.50px" width="18" height="17" viewBox="0 0 18 17"><path d="M3.4 0.9 H2 Q1 0.9 1 1.9 V5.9 Q1 6.9 2 6.9 H3.4 M3.4 10.5 H2 Q1 10.5 1 11.5 V15.3 Q1 16.3 2 16.3 H3.4" fill="none" stroke="#4cb6f5" stroke-width="1.2"/><path d="M5.9 1.8 H17 M5.9 5.5 H17 M5.9 11.4 H17 M5.9 15.1 H17" stroke="#cfcfcf" stroke-width="1.2"/></svg>
<svg class="r" style="left:245.50px;top:368.00px" width="17" height="20" viewBox="0 0 17 20"><path d="M1.7 0.8 V7.2 H7.8" fill="none" stroke="#4cb6f5" stroke-width="1.3" stroke-linejoin="round"/><path d="M2 7 C4 3.6 8 2.1 11 2.8 C15.2 4 16.6 8.6 13.6 11.8 L3.6 18.5" fill="none" stroke="#4cb6f5" stroke-width="1.3" stroke-linecap="round"/></svg>
<svg class="r" style="left:243.80px;top:404.30px" width="18.5" height="18.5" viewBox="0 0 18.5 18.5"><circle cx="9.25" cy="9.25" r="8.4" fill="none" stroke="#cfcfcf" stroke-width="1.2"/><path d="M9.25 5 V13.5 M5 9.25 H13.5" stroke="#4cb6f5" stroke-width="1.3"/></svg>
<svg class="r" style="left:245.80px;top:440.50px" width="15.5" height="19.5" viewBox="0 0 15.5 19.5"><rect x="0.8" y="0.8" width="13.6" height="17.8" rx="2" fill="none" stroke="#cfcfcf" stroke-width="1.2"/><circle cx="4.4" cy="6.8" r="1.4" fill="none" stroke="#4cb6f5" stroke-width="1"/><circle cx="4.4" cy="12" r="1.4" fill="none" stroke="#4cb6f5" stroke-width="1"/><path d="M7.2 6.8 H11.4 M7.2 12 H11.4" stroke="#4cb6f5" stroke-width="1.1"/></svg>
<svg class="r" style="left:244.00px;top:490.00px" width="19" height="14.5" viewBox="0 0 19 14.5"><rect x="0.2" y="0.4" width="18.6" height="13.3" rx="1.8" fill="#3b3b3b"/><path d="M0.2 2.2 Q0.2 0.4 2 0.4 H17 Q18.8 0.4 18.8 2.2 V2.6 H0.2 Z" fill="#6e6e6e"/><path d="M2.7 4.4 L6.5 7.6 L2.7 10.8" fill="none" stroke="#e8e8e8" stroke-width="1.6"/><path d="M8.4 11.1 H13.6" stroke="#e8e8e8" stroke-width="1.3"/></svg>
<svg class="r" style="left:244.20px;top:535.00px" width="19" height="18" viewBox="0 0 19 18"><path d="M8 1.3 H3.1 Q1.1 1.3 1.1 3.3 V14.4 Q1.1 16.4 3.1 16.4 H15.7 Q17.7 16.4 17.7 14.4 V10.6 M1.1 10.4 H7 Q9 10.4 9 12.4 V16.4" fill="none" stroke="#cfcfcf" stroke-width="1.2"/><path d="M10.6 7.8 L17 1.5 M12.2 1.4 H17.2 V6.4" fill="none" stroke="#4cb6f5" stroke-width="1.3"/></svg>
<div class="r" style="left:574px;top:314px;width:167px;height:296px;box-sizing:border-box;background:#2c2c2c;border-radius:8px;box-shadow:0 0 0 1px rgba(0,0,0,.45),0 8px 16px rgba(0,0,0,.3);"></div>
<div class="t" style="left:624.40px;top:328px;font-size:16.00px;color:#ffffff;letter-spacing:-0.495px;">Name</div>
<div class="t" style="left:624.40px;top:363px;font-size:16.00px;color:#ffffff;letter-spacing:0.014px;">Date modified</div>
<div class="t" style="left:624.40px;top:399px;font-size:16.00px;color:#ffffff;letter-spacing:-0.672px;">Type</div>
<div class="t" style="left:624.40px;top:434px;font-size:16.00px;color:#ffffff;letter-spacing:-1.031px;">Size</div>
<div class="t" style="left:624.20px;top:470px;font-size:16.00px;color:#ffffff;letter-spacing:-0.234px;">(None)</div>
<div class="r" style="left:574.00px;top:496.00px;width:167.00px;height:1.00px;background:#3d3d3d;"></div>
<div class="r" style="left:596.00px;top:513.00px;width:5.00px;height:5.00px;background:#d0d0d0;border-radius:50%;"></div>
<div class="t" style="left:624.20px;top:509px;font-size:16.00px;color:#ffffff;letter-spacing:-0.335px;">Ascending</div>
<div class="t" style="left:624.20px;top:544px;font-size:16.00px;color:#ffffff;letter-spacing:-0.330px;">Descending</div>
<div class="r" style="left:574.00px;top:571.00px;width:167.00px;height:1.00px;background:#3d3d3d;"></div>
<div class="t" style="left:624.20px;top:584px;font-size:16.00px;color:#ffffff;letter-spacing:-0.427px;">More...</div>
</div>
</body></html>
